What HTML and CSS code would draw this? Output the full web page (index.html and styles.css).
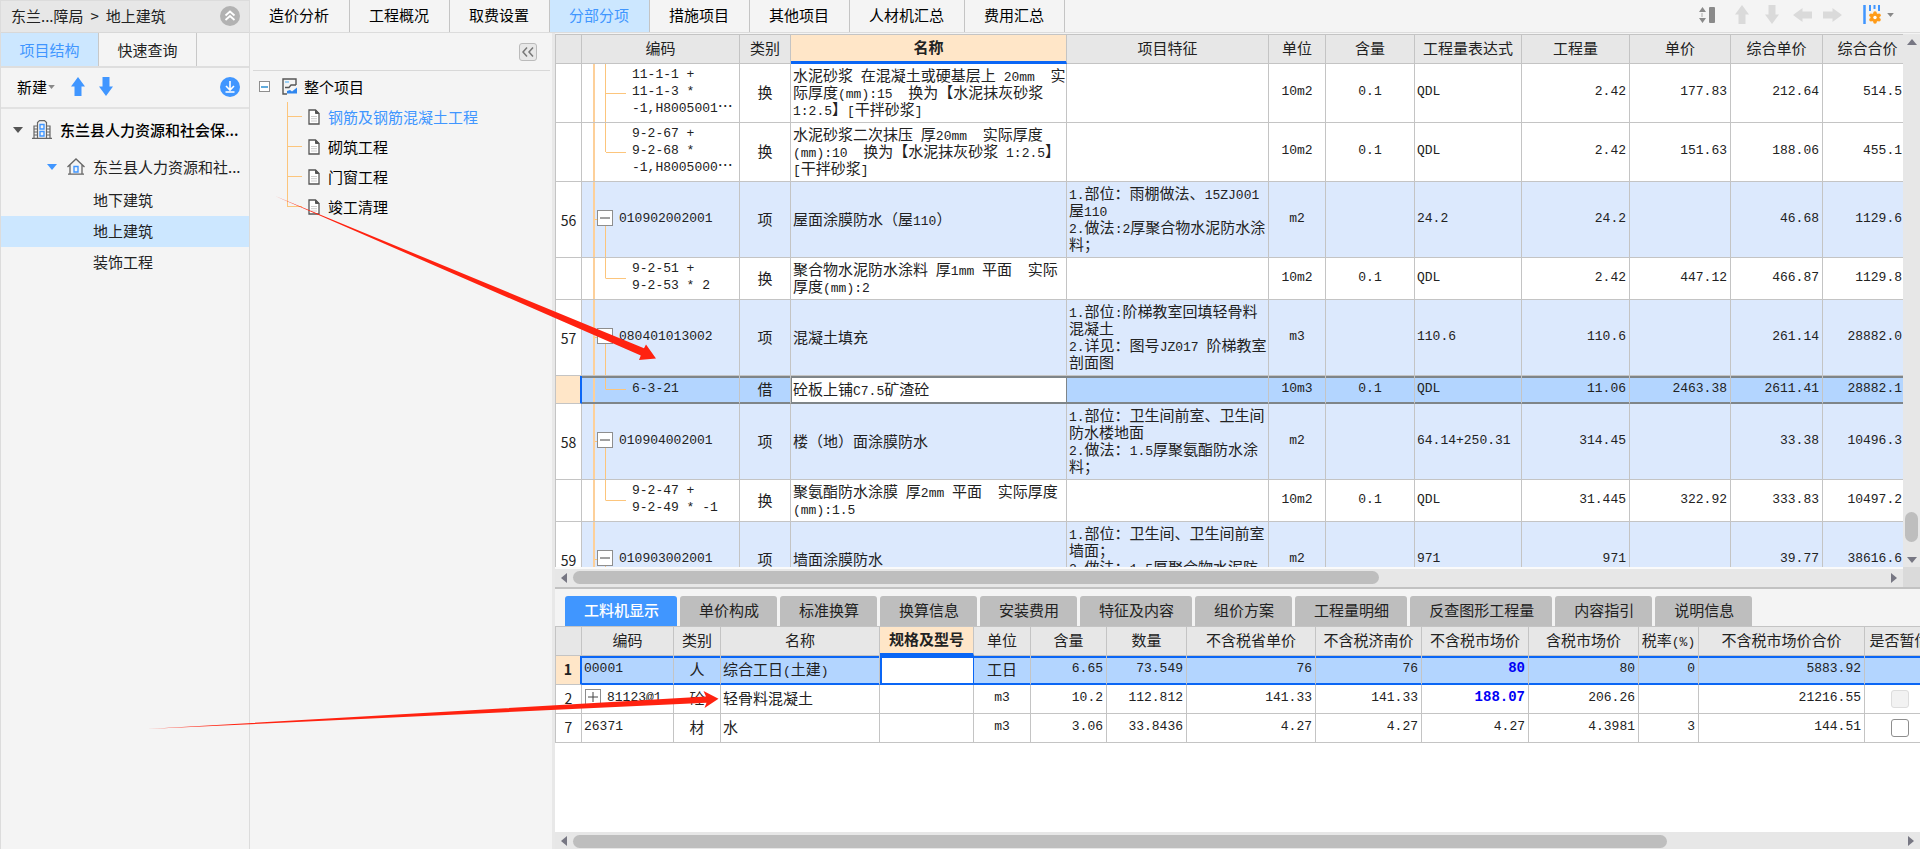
FILE: index.html
```html
<!DOCTYPE html>
<html lang="zh-CN">
<head>
<meta charset="utf-8">
<title>分部分项</title>
<link rel="stylesheet" href="styles.css">
</head>
<body>
<svg class="defs" aria-hidden="true">
  <symbol id="arrow-up" viewBox="0 0 14 19"><path d="M7 0 14 9.500H10.500V19H3.500V9.500H0Z"/></symbol>
  <symbol id="arrow-down" viewBox="0 0 14 19"><path d="M7 19 14 9.500H10.500V0H3.500V9.500H0Z"/></symbol>
  <symbol id="arrow-left" viewBox="0 0 19 14"><path d="M0 7 9.500 0V3.500H19V10.500H9.500V14Z"/></symbol>
  <symbol id="arrow-right" viewBox="0 0 19 14"><path d="M19 7 9.500 0V3.500H0V10.500H9.500V14Z"/></symbol>
  <symbol id="caret" viewBox="0 0 10 6"><path d="M0 0H10L5 6Z"/></symbol>
  <symbol id="caret-up" viewBox="0 0 10 6"><path d="M0 6H10L5 0Z"/></symbol>
  <symbol id="caret-left" viewBox="0 0 6 10"><path d="M6 0V10L0 5Z"/></symbol>
  <symbol id="caret-right" viewBox="0 0 6 10"><path d="M0 0V10L6 5Z"/></symbol>
  <symbol id="doc" viewBox="0 0 12 16"><path d="M1 1H7.500L11 4.500V15H1Z" fill="#fff" stroke="#555" stroke-width="1.300"/><path d="M7.500 1V4.500H11Z" fill="#555" stroke="#555"/><path d="M3 7.500H9M3 9.700H9M3 12H9" stroke="#ccc" fill="none"/></symbol>
</svg>

<div class="app">
  <aside class="project">
    <header class="crumb"><span>东兰...障局</span><span>&gt;</span><span>地上建筑</span>
      <button class="icon-btn last" aria-label="收起"><svg width="20" height="20" viewBox="0 0 20 20"><circle cx="10" cy="10" r="10" fill="#b2b2b2"/><path d="M5.500 9.500 10 5.500 14.500 9.500M5.500 14 10 10 14.500 14" fill="none" stroke="#fff" stroke-width="1.800"/></svg></button>
    </header>
    <div class="side-tabs"><button class="side-tab on">项目结构</button><button class="side-tab">快速查询</button></div>
    <div class="side-tools">
      <button class="new-btn">新建<svg width="7" height="4"><use href="#caret"/></svg></button>
      <button class="icon-btn move" aria-label="上移"><svg width="14" height="19"><use href="#arrow-up"/></svg></button>
      <button class="icon-btn move" aria-label="下移"><svg width="14" height="19"><use href="#arrow-down"/></svg></button>
      <button class="icon-btn last" aria-label="下载"><svg width="20" height="20" viewBox="0 0 20 20"><circle cx="10" cy="10" r="10" fill="#4096ff"/><path d="M10 4V12.500M6 9 10 13 14 9M5.500 15H14.500" fill="none" stroke="#fff" stroke-width="1.600"/></svg></button>
    </div>
    <nav class="tree">
      <a class="node root" href="#"><svg width="10" height="6" fill="#555"><use href="#caret"/></svg>
        <svg width="20" height="19" viewBox="0 0 20 19" fill="none" stroke="#666" stroke-width="1.200"><path d="M0 18.400H20M5.500 18V2.500L7.500 .600H12.500L14.500 2.500V18M5.500 6H2V18M14.500 6H18V18M2 9H5M2 12H5M2 15H5M15 9H18M15 12H18M15 15H18"/><path d="M8 4.500H12V9H8ZM8 11.500H12V16H8Z" stroke="#4096ff" stroke-width="1.400"/></svg>
        <span>东兰县人力资源和社会保...</span></a>
      <a class="node unit" href="#"><svg width="10" height="6" fill="#4096ff"><use href="#caret"/></svg>
        <svg width="18" height="17" viewBox="0 0 18 17" fill="none" stroke="#666" stroke-width="1.300"><path d="M.500 9 9 1 17.500 9M3 7V15.800M15 7V15.800M1 16.200H17"/><path d="M7 8.500H11V14H7Z" stroke="#4096ff" stroke-width="1.400"/></svg>
        <span>东兰县人力资源和社...</span></a>
      <a class="node leaf" href="#">地下建筑</a>
      <a class="node leaf on" href="#">地上建筑</a>
      <a class="node leaf" href="#">装饰工程</a>
    </nav>
  </aside>

  <div class="work">
    <div class="topbar">
      <nav class="top-tabs">
        <button class="top-tab">造价分析</button><button class="top-tab">工程概况</button><button class="top-tab">取费设置</button><button class="top-tab on">分部分项</button><button class="top-tab">措施项目</button><button class="top-tab">其他项目</button><button class="top-tab">人材机汇总</button><button class="top-tab">费用汇总</button>
      </nav>
      <div class="top-tools">
        <button class="icon-btn height" aria-label="行高"><svg width="16" height="16" viewBox="0 0 16 16" fill="#8a8a8a"><path d="M0 5 3.500 0 7 5ZM0 11 3.500 16 7 11Z"/><path d="M3 6V10" stroke="#aaa"/><rect x="10" width="6" height="16" rx="1"/></svg></button>
        <button class="icon-btn dim" aria-label="上移"><svg width="14" height="19"><use href="#arrow-up"/></svg></button>
        <button class="icon-btn dim" aria-label="下移"><svg width="14" height="19"><use href="#arrow-down"/></svg></button>
        <button class="icon-btn dim" aria-label="左移"><svg width="19" height="14"><use href="#arrow-left"/></svg></button>
        <button class="icon-btn dim" aria-label="右移"><svg width="19" height="14"><use href="#arrow-right"/></svg></button>
        <button class="icon-btn set" aria-label="列设置"><svg width="18" height="19" viewBox="0 0 18 19"><path d="M1.500 0V19" stroke="#4096ff" stroke-width="2.500"/><path d="M7 0V6M11.500 0V4M16 0V6" stroke="#4096ff" stroke-width="2"/><g fill="#ff9c1a"><circle cx="12" cy="12.500" r="4.500"/><circle cx="12" cy="8" r="1.800"/><circle cx="12" cy="17" r="1.800"/><circle cx="8" cy="10.200" r="1.800"/><circle cx="16" cy="10.200" r="1.800"/><circle cx="8" cy="14.800" r="1.800"/><circle cx="16" cy="14.800" r="1.800"/></g><circle cx="12" cy="12.500" r="1.700" fill="#fff"/></svg><svg width="7" height="4" fill="#888"><use href="#caret"/></svg></button>
      </div>
    </div>

    <div class="body">
      <section class="sections">
        <div class="sec-head"><button class="fold" aria-label="折叠"><svg width="12" height="10" viewBox="0 0 12 10" fill="none" stroke="#777" stroke-width="1.500"><path d="M5 .500 1 5 5 9.500M11 .500 7 5 11 9.500"/></svg></button></div>
        <div class="sec-root"><button class="sq small" aria-label="收起整个项目"><svg width="7" height="2"><path d="M0 1H7" stroke="#2d8fd0" stroke-width="1.500"/></svg></button>
          <svg width="16" height="17" viewBox="0 0 16 17" fill="none"><path d="M14 7V1H1V16H5" stroke="#555" stroke-width="1.400"/><path d="M3 4H7" stroke="#7fc4f5" stroke-width="1.500"/><path d="M3 9.500H7L9 7H14" stroke="#555" stroke-width="1.300"/><path d="M5 15.500V13L8 12L10 13.500L15 9.500V15.500Z" fill="#2f86ee"/></svg>
          <span>整个项目</span></div>
        <ul class="sec-list">
          <li><a class="on" href="#"><svg width="12" height="16"><use href="#doc"/></svg>钢筋及钢筋混凝土工程</a></li>
          <li><a href="#"><svg width="12" height="16"><use href="#doc"/></svg>砌筑工程</a></li>
          <li><a href="#"><svg width="12" height="16"><use href="#doc"/></svg>门窗工程</a></li>
          <li><a href="#"><svg width="12" height="16"><use href="#doc"/></svg>竣工清理</a></li>
        </ul>
      </section>

      <main class="main">
        <div class="upper">
          <div class="view">
            <table class="grid bill">
              <colgroup><col class="w26"><col class="w158"><col class="w51"><col class="w276"><col class="w202"><col class="w57"><col class="w89"><col class="w107"><col class="w108"><col class="w101"><col class="w92"><col class="w90"></colgroup>
              <thead><tr><th></th><th>编码</th><th>类别</th><th class="focus">名称</th><th>项目特征</th><th>单位</th><th>含量</th><th>工程量表达式</th><th>工程量</th><th>单价</th><th>综合单价</th><th>综合合价</th></tr></thead>
              <tbody>
              <tr><td class="no"></td><td class="code kid">11-1-1 +
11-1-3 *
-1,H8005001<span class="cjk">…</span></td><td class="c">换</td><td class="t">水泥砂浆<span class="n"> </span>在混凝土或硬基层上<span class="n"> 20mm  </span>实
际厚度<span class="n">(mm):15  </span>换为【水泥抹灰砂浆
<span class="n">1:2.5</span>】<span class="n">[</span>干拌砂浆<span class="n">]</span></td><td class="t"></td><td class="c n">10m2</td><td class="c n">0.1</td><td class="l n">QDL</td><td class="r n">2.42</td><td class="r n">177.83</td><td class="r n">212.64</td><td class="r n">514.5</td></tr>
              <tr><td class="no"></td><td class="code kid end">9-2-67 +
9-2-68 *
-1,H8005000<span class="cjk">…</span></td><td class="c">换</td><td class="t">水泥砂浆二次抹压<span class="n"> </span>厚<span class="n">20mm  </span>实际厚度
<span class="n">(mm):10  </span>换为【水泥抹灰砂浆<span class="n"> 1:2.5</span>】
<span class="n">[</span>干拌砂浆<span class="n">]</span></td><td class="t"></td><td class="c n">10m2</td><td class="c n">0.1</td><td class="l n">QDL</td><td class="r n">2.42</td><td class="r n">151.63</td><td class="r n">188.06</td><td class="r n">455.1</td></tr>
              <tr class="item"><td class="no">56</td><td class="code par"><div class="par-in"><button class="sq" aria-label="收起"><svg width="10" height="10"><path d="M0 5H10" stroke="#444"/></svg></button>010902002001</div></td><td class="c">项</td><td class="t">屋面涂膜防水（屋<span class="n">110</span>）</td><td class="t"><span class="n">1.</span>部位：雨棚做法、<span class="n">15ZJ001</span>
屋<span class="n">110</span>
<span class="n">2.</span>做法<span class="n">:2</span>厚聚合物水泥防水涂
料；</td><td class="c n">m2</td><td class="c n"></td><td class="l n">24.2</td><td class="r n">24.2</td><td class="r n"></td><td class="r n">46.68</td><td class="r n">1129.6</td></tr>
              <tr><td class="no"></td><td class="code kid end">9-2-51 +
9-2-53 * 2</td><td class="c">换</td><td class="t">聚合物水泥防水涂料<span class="n"> </span>厚<span class="n">1mm </span>平面<span class="n">  </span>实际
厚度<span class="n">(mm):2</span></td><td class="t"></td><td class="c n">10m2</td><td class="c n">0.1</td><td class="l n">QDL</td><td class="r n">2.42</td><td class="r n">447.12</td><td class="r n">466.87</td><td class="r n">1129.8</td></tr>
              <tr class="item"><td class="no">57</td><td class="code par"><div class="par-in"><button class="sq" aria-label="收起"><svg width="10" height="10"><path d="M0 5H10" stroke="#444"/></svg></button>080401013002</div></td><td class="c">项</td><td class="t">混凝土填充</td><td class="t"><span class="n">1.</span>部位<span class="n">:</span>阶梯教室回填轻骨料
混凝土
<span class="n">2.</span>详见：图号<span class="n">JZ017 </span>阶梯教室
剖面图</td><td class="c n">m3</td><td class="c n"></td><td class="l n">110.6</td><td class="r n">110.6</td><td class="r n"></td><td class="r n">261.14</td><td class="r n">28882.0</td></tr>
              <tr class="sel"><td class="no"></td><td class="code kid end">6-3-21</td><td class="c">借</td><td class="t cell">砼板上铺<span class="n">C7.5</span>矿渣砼</td><td class="t"></td><td class="c n">10m3</td><td class="c n">0.1</td><td class="l n">QDL</td><td class="r n">11.06</td><td class="r n">2463.38</td><td class="r n">2611.41</td><td class="r n">28882.1</td></tr>
              <tr class="item"><td class="no">58</td><td class="code par"><div class="par-in"><button class="sq" aria-label="收起"><svg width="10" height="10"><path d="M0 5H10" stroke="#444"/></svg></button>010904002001</div></td><td class="c">项</td><td class="t">楼（地）面涂膜防水</td><td class="t"><span class="n">1.</span>部位：卫生间前室、卫生间
防水楼地面
<span class="n">2.</span>做法：<span class="n">1.5</span>厚聚氨酯防水涂
料；</td><td class="c n">m2</td><td class="c n"></td><td class="l n">64.14+250.31</td><td class="r n">314.45</td><td class="r n"></td><td class="r n">33.38</td><td class="r n">10496.3</td></tr>
              <tr><td class="no"></td><td class="code kid end">9-2-47 +
9-2-49 * -1</td><td class="c">换</td><td class="t">聚氨酯防水涂膜<span class="n"> </span>厚<span class="n">2mm </span>平面<span class="n">  </span>实际厚度
<span class="n">(mm):1.5</span></td><td class="t"></td><td class="c n">10m2</td><td class="c n">0.1</td><td class="l n">QDL</td><td class="r n">31.445</td><td class="r n">322.92</td><td class="r n">333.83</td><td class="r n">10497.2</td></tr>
              <tr class="item"><td class="no">59</td><td class="code par"><div class="par-in"><button class="sq" aria-label="收起"><svg width="10" height="10"><path d="M0 5H10" stroke="#444"/></svg></button>010903002001</div></td><td class="c">项</td><td class="t">墙面涂膜防水</td><td class="t"><span class="n">1.</span>部位：卫生间、卫生间前室
墙面；
<span class="n">2.</span>做法：<span class="n">1.5</span>厚聚合物水泥防
水涂料；</td><td class="c n">m2</td><td class="c n"></td><td class="l n">971</td><td class="r n">971</td><td class="r n"></td><td class="r n">39.77</td><td class="r n">38616.6</td></tr>
              </tbody>
            </table>
          </div>
          <div class="vbar"><svg width="10" height="6"><use href="#caret-up"/></svg><div class="vtrack"><div class="vthumb"></div></div><svg width="10" height="6"><use href="#caret"/></svg></div>
          <div class="hbar"><svg width="6" height="10"><use href="#caret-left"/></svg><div class="track"><div class="thumb bill-thumb"></div></div><svg width="6" height="10"><use href="#caret-right"/></svg></div>
          <div class="corner"></div>
        </div>

        <div class="lower">
          <nav class="low-tabs">
            <button class="low-tab on">工料机显示</button><button class="low-tab">单价构成</button><button class="low-tab">标准换算</button><button class="low-tab">换算信息</button><button class="low-tab">安装费用</button><button class="low-tab">特征及内容</button><button class="low-tab">组价方案</button><button class="low-tab">工程量明细</button><button class="low-tab">反查图形工程量</button><button class="low-tab">内容指引</button><button class="low-tab">说明信息</button>
          </nav>
          <div class="view">
            <table class="grid res">
              <colgroup><col class="w26"><col class="w92"><col class="w47"><col class="w159"><col class="w94"><col class="w57"><col class="w76"><col class="w80"><col class="w129"><col class="w106"><col class="w107"><col class="w110"><col class="w60"><col class="w166"><col class="w70"></colgroup>
              <thead><tr><th></th><th>编码</th><th>类别</th><th>名称</th><th class="focus">规格及型号</th><th>单位</th><th>含量</th><th>数量</th><th>不含税省单价</th><th>不含税济南价</th><th>不含税市场价</th><th>含税市场价</th><th>税率<span class="n">(%)</span></th><th>不含税市场价合价</th><th>是否暂估</th></tr></thead>
              <tbody>
              <tr class="cur"><td class="no">1</td><td class="l n">00001</td><td class="c">人</td><td class="t">综合工日<span class="n">(</span>土建<span class="n">)</span></td><td class="cell"></td><td class="c">工日</td><td class="r n">6.65</td><td class="r n">73.549</td><td class="r n">76</td><td class="r n">76</td><td class="r n price">80</td><td class="r n">80</td><td class="r n">0</td><td class="r n">5883.92</td><td></td></tr>
              <tr><td class="no">2</td><td class="l n"><div class="exp"><button class="sq" aria-label="展开"><svg width="10" height="10"><path d="M0 5H10M5 0V10" stroke="#444"/></svg></button>81123@1</div></td><td class="c">砼</td><td class="t">轻骨料混凝土</td><td></td><td class="c n">m3</td><td class="r n">10.2</td><td class="r n">112.812</td><td class="r n">141.33</td><td class="r n">141.33</td><td class="r n price">188.07</td><td class="r n">206.26</td><td></td><td class="r n">21216.55</td><td class="c"><input type="checkbox" disabled aria-label="是否暂估"></td></tr>
              <tr><td class="no">7</td><td class="l n">26371</td><td class="c">材</td><td class="t">水</td><td></td><td class="c n">m3</td><td class="r n">3.06</td><td class="r n">33.8436</td><td class="r n">4.27</td><td class="r n">4.27</td><td class="r n">4.27</td><td class="r n">4.3981</td><td class="r n">3</td><td class="r n">144.51</td><td class="c"><input type="checkbox" aria-label="是否暂估"></td></tr>
              </tbody>
            </table>
          </div>
          <div class="hbar"><svg width="6" height="10"><use href="#caret-left"/></svg><div class="track"><div class="thumb res-thumb"></div></div><svg width="6" height="10"><use href="#caret-right"/></svg></div>
        </div>
      </main>
    </div>
  </div>
</div>

<svg class="marks" width="730" height="740" viewBox="0 0 730 740" fill="#ff2210" aria-hidden="true">
  <path d="M275 196 644 348.300 646 344.500 656 358.500 639 360 640.800 355.500Z"/>
  <path d="M147 729 706 696.500 703.500 691 718.500 698.700 704.500 708 706.500 702.700Z"/>
</svg>
</body>
</html>
```
FILE: styles.css
```css
* { box-sizing: border-box; }
body {
  margin: 0;
  background: #f4f4f4;
  color: #222;
  font: 15px/20px "Noto Sans CJK SC", sans-serif;
  overflow: hidden;
}
button {
  font: inherit;
  color: inherit;
  background: none;
  border: 0;
  padding: 0;
  white-space: nowrap;
}
a { color: inherit; text-decoration: none; }
svg { flex: none; display: block; }
.defs { position: absolute; width: 0; height: 0; }
.marks { position: absolute; left: 0; top: 0; pointer-events: none; }
.icon-btn { display: flex; align-items: center; justify-content: center; }

.app { display: flex; height: 100vh; }

/* project panel */
.project { flex: 0 0 250px; border: 1px solid #dcdcdc; border-bottom: 0; }
.crumb {
  display: flex;
  align-items: center;
  gap: 7px;
  height: 32px;
  padding: 0 9px 2px 10px;
  background: #e7e7e7;
  border-bottom: 1px solid #d8d8d8;
}
.side-tabs { display: flex; height: 33px; }
.side-tab { width: 98px; border-right: 1px solid #c8c8c8; }
.side-tab.on { background: #cce7ff; color: #4096ff; }
.side-tools {
  display: flex;
  align-items: center;
  gap: 14px;
  height: 43px;
  padding: 0 9px 2px 16px;
  border-top: 2px solid #dedede;
  border-bottom: 2px solid #e2e2e2;
}
.new-btn { display: flex; align-items: center; gap: 1px; margin-right: 2px; color: #000; }
.new-btn svg { fill: #888; }
.move { fill: #4096ff; }
.last { margin-left: auto; }
.tree { display: flex; flex-direction: column; padding-top: 2px; }
.node { display: flex; align-items: center; height: 31px; padding-bottom: 1px; white-space: nowrap; }
.root { height: 38px; padding-left: 12px; gap: 9px; font-weight: 500; color: #000; }
.unit { height: 36px; padding-left: 46px; gap: 10px; }
.root svg + svg { margin-right: -1px; }
.unit svg + svg { margin-right: -2px; }
.leaf { padding-left: 92px; }
.leaf.on { background: #cce7ff; }

/* top bar */
.work { flex: 1; min-width: 0; display: flex; flex-direction: column; }
.topbar {
  display: flex;
  justify-content: space-between;
  height: 33px;
  border-bottom: 1px solid #dcdcdc;
}
.top-tabs { display: flex; color: #000; }
.top-tab { padding: 0 20px 3px 19px; border-right: 1px solid #c4c4c4; }
.top-tab.on { background: #cce7ff; color: #4096ff; }
.top-tools { display: flex; align-items: center; padding: 0 26px 3px 0; }
.height { margin-right: 12px; }
.dim { width: 30px; fill: #dadada; }
.set { gap: 6px; margin-left: 16px; }

/* section tree */
.body { flex: 1; min-height: 0; display: flex; }
.sections { flex: 0 0 305px; border-right: 3px solid #e8e8e8; padding-left: 3px; color: #000; }
.sec-head {
  display: flex;
  justify-content: flex-end;
  align-items: center;
  height: 38px;
  padding-right: 13px;
  margin-right: 2px;
  border-bottom: 1px solid #d8d8d8;
}
.fold {
  display: grid;
  place-items: center;
  width: 18px;
  height: 18px;
  background: #e8e8e8;
  border: 1px solid #bbb;
  border-radius: 3px;
}
.sec-root { display: flex; align-items: center; height: 31px; padding-left: 6px; gap: 6px; }
.sec-root .sq { margin-right: 6px; }
.sec-list { list-style: none; margin: 0; padding: 0 0 0 34px; }
.sec-list li {
  height: 30px;
  padding-left: 21px;
  background:
    linear-gradient(#fcc57c, #fcc57c) 0 0 / 1px 100% no-repeat,
    linear-gradient(#fcc57c, #fcc57c) 0 14px / 15px 1px no-repeat;
}
.sec-list li:last-child {
  background:
    linear-gradient(#fcc57c, #fcc57c) 0 0 / 1px 14px no-repeat,
    linear-gradient(#fcc57c, #fcc57c) 0 14px / 15px 1px no-repeat;
}
.sec-list a { display: flex; align-items: center; gap: 8px; height: 30px; }
.sec-list a.on { color: #4096ff; }

.sq {
  flex: none;
  display: grid;
  place-items: center;
  width: 16px;
  height: 16px;
  background: #fff;
  border: 1px solid #8e8e8e;
}
.sq.small { width: 11px; height: 11px; }

/* grids */
.main { flex: 1; min-width: 0; display: flex; flex-direction: column; }
.upper {
  flex: 555 1 0;
  min-height: 0;
  display: grid;
  grid-template-columns: minmax(0, 1fr) 17px;
  grid-template-rows: minmax(0, 1fr) 20px;
  border-bottom: 2px solid #c2c2c2;
  padding-top: 1px;
}
.view { overflow: hidden; background: #fff; }
.grid {
  table-layout: fixed;
  width: 1px;
  border-spacing: 0;
  border-left: 1px solid #c4c4c4;
  border-top: 1px solid #c4c4c4;
  line-height: 17px;
}
.w26 { width: 26px; } .w47 { width: 47px; } .w51 { width: 51px; } .w57 { width: 57px; }
.w60 { width: 60px; } .w70 { width: 70px; } .w76 { width: 76px; } .w80 { width: 80px; }
.w89 { width: 89px; } .w90 { width: 90px; } .w92 { width: 92px; } .w94 { width: 94px; }
.w101 { width: 101px; } .w106 { width: 106px; } .w107 { width: 107px; } .w108 { width: 108px; }
.w110 { width: 110px; } .w129 { width: 129px; } .w158 { width: 158px; } .w159 { width: 159px; }
.w166 { width: 166px; } .w202 { width: 202px; } .w276 { width: 276px; }

.grid th, .grid td {
  border-right: 1px solid #c4c4c4;
  border-bottom: 1px solid #c4c4c4;
  padding: 2px 2px 5px;
  white-space: pre;
}
.grid th { height: 29px; padding: 0 0 3px; background: #e7e7e7; font-weight: 400; }
.grid th.focus { background: #ffe6c8; border-bottom: 3px solid #0a66f5; font-weight: 700; }
.grid td { height: 28px; }
.n { font-family: "Liberation Mono", monospace; font-size: 13px; }
span.n { line-height: 8px; }
.cjk { font-family: "Noto Sans CJK SC", sans-serif; font-size: 15px; line-height: 8px; }
.c { text-align: center; }
.r { text-align: right; }
.grid .r { padding-right: 3px; }
.grid td.no { padding: 2px 0 0; text-align: center; font-size: 14px; background: #fff; }
.item td { background: #dce9fd; }

.grid td.code {
  font-family: "Liberation Mono", monospace;
  font-size: 13px;
  padding-left: 50px;
  background-repeat: no-repeat;
  background-image:
    linear-gradient(#fdd09a, #fdd09a),
    linear-gradient(#fcc57c, #fcc57c),
    linear-gradient(#fcc57c, #fcc57c);
}
.grid td.kid { background-size: 2px 100%, 1px 100%, 20px 1px; background-position: 11px 0, 23px 0, 24px 50%; }
.grid td.kid.end { background-size: 2px 100%, 1px 50%, 20px 1px; }
.grid td.par { padding-left: 15px; background-size: 2px 100%, 1px 50%, 4px 1px; background-position: 11px 0, 23px 100%, 12px 50%; }
.par-in, .exp { display: flex; align-items: center; gap: 6px; }

.sel td { background-color: #b3d5ff; box-shadow: inset 0 2px #7f8588, inset 0 -1px #7f8588; border-bottom-color: #7f8588; }
.grid .sel td { border-bottom-color: #7f8588; }
.grid .sel td.no { background: #ffe6c8; box-shadow: none; border-right: 2px solid #0a66f5; border-bottom-color: #c4c4c4; }
.grid .sel td.cell { background: #fff; box-shadow: inset 0 2px #7f8588, inset 0 -1px #7f8588, inset 1px 0 #7f8588; border-right-color: #7f8588; }
.bill .r:last-child { padding-right: 10px; }

/* scroll bars */
.hbar {
  grid-column: 1;
  display: flex;
  align-items: center;
  gap: 6px;
  padding: 0 6px;
  height: 100%;
  background: #e7e7e7;
  border-top: 2px solid #fafafa;
  fill: #777783;
}
.track { flex: 1; height: 13px; }
.thumb { height: 13px; border-radius: 7px; background: #bebebe; }
.bill-thumb { width: 61.4%; }
.res-thumb { width: 82.3%; }
.vbar {
  grid-column: 2;
  grid-row: 1;
  display: flex;
  flex-direction: column;
  align-items: center;
  gap: 6px;
  padding: 5px 0 4px;
  background: #e7e7e7;
  fill: #777783;
}
.vtrack { flex: 1; display: flex; flex-direction: column; justify-content: flex-end; padding-bottom: 9px; }
.vthumb { width: 13px; height: 30px; border-radius: 7px; background: #bebebe; }
.corner { background: #dadada; }

/* resource panel */
.lower { flex: 261 1 0; min-height: 0; display: flex; flex-direction: column; }
.lower .view { flex: 1; min-height: 0; }
.low-tabs { display: flex; gap: 3px; padding: 7px 0 0 10px; }
.low-tab {
  height: 30px;
  padding: 0 18px 2px 19px;
  background: #bebebe;
  border-radius: 3px 3px 0 0;
}
.low-tab.on { background: #4096ff; color: #fff; font-weight: 500; }
.grid.res td { height: 29px; padding-top: 1px; padding-bottom: 4px; }
.grid.res td.no { padding: 0; }
.grid.res .price { color: #0000f5; font-size: 14px; font-weight: 700; }
.grid.res .cur td { background: #b3d5ff; border-bottom-color: #0a66f5; box-shadow: inset 0 2px #0a66f5, inset 0 -1px #0a66f5; }
.grid.res .cur td.no { background: #ffe6c8; border-right: 2px solid #0a66f5; border-bottom-color: #c4c4c4; box-shadow: none; font-weight: 700; }
.grid.res .cur td.cell { background: #fff; border-right-color: #0a66f5; box-shadow: inset 0 2px #0a66f5, inset 0 -1px #0a66f5, inset 2px 0 #0a66f5; }
.exp { padding-left: 1px; }
.res input {
  appearance: none;
  display: block;
  width: 18px;
  height: 18px;
  margin: 3px auto 0;
  background: #fff;
  border: 1px solid #8e8e8e;
  border-radius: 3px;
}
.res input:disabled { background: #f2f2f2; border-color: #ddd; }
.lower .hbar { height: 17px; flex: none; border-top-width: 1px; border-top-color: #e7e7e7; }
```
